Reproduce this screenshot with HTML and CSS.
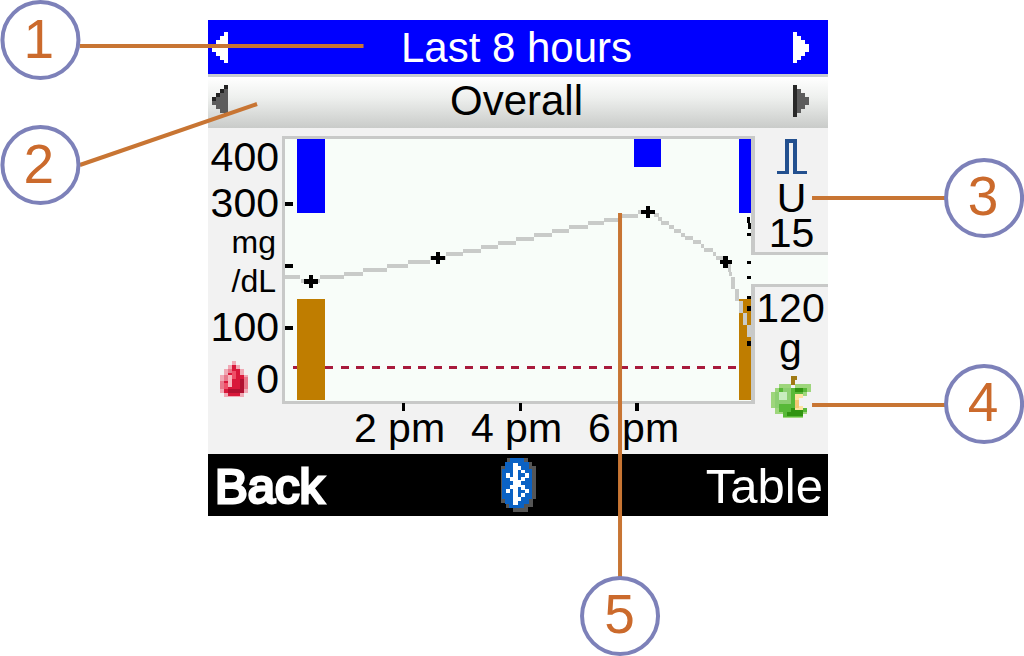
FILE: index.html
```html
<!DOCTYPE html>
<html lang="en">
<head>
<meta charset="utf-8">
<title>Last 8 hours – Overall</title>
<link rel="stylesheet" href="styles.css">
</head>
<body>
<main class="figure">
  <section class="device">
    <header class="bar bar-period">
      <button class="arrow" type="button" aria-label="Previous period">
        <svg width="16" height="32" viewBox="0 0 16 32" shape-rendering="crispEdges"><path fill="#fff" d="M12 0h4v31h-4v-3h-4v-4H4v-4H0v-8h4V8h4V4h4z"/></svg>
      </button>
      <h1 class="bar-title">Last 8 hours</h1>
      <button class="arrow" type="button" aria-label="Next period">
        <svg width="16" height="32" viewBox="0 0 16 32" shape-rendering="crispEdges"><path fill="#fff" d="M0 0h4v4h4v4h4v4h4v8h-4v4H8v4H4v3H0z"/></svg>
      </button>
    </header>
    <div class="bar bar-view">
      <button class="arrow" type="button" aria-label="Previous view">
        <svg width="16" height="32" viewBox="0 0 16 32" shape-rendering="crispEdges"><path fill="#5c5c5c" d="M12 0h4v31h-4v-3h-4v-4H4v-4H0v-8h4V8h4V4h4z"/><path fill="#222" d="M12 0h4v4h-4zM8 4h4v4H8zM4 8h4v4H4zM0 12h4v4H0z"/></svg>
      </button>
      <h2 class="bar-title">Overall</h2>
      <button class="arrow" type="button" aria-label="Next view">
        <svg width="16" height="32" viewBox="0 0 16 32" shape-rendering="crispEdges"><path fill="#5c5c5c" d="M4 4h4v4h4v4h4v8h-4v4H8v4H4z"/><path fill="#282828" d="M0 0h4v32H0z"/></svg>
      </button>
    </div>

    <div class="body">
      <div class="y-axis">
        <span class="tick-label">400</span>
        <span class="tick-label">300</span>
        <span class="unit">mg</span>
        <span class="unit">/dL</span>
        <span class="tick-label">100</span>
        <span class="tick-label zero">
          <svg class="drop" width="28" height="36" viewBox="0 0 28 36" shape-rendering="crispEdges">
            <path fill="#f0a9b5" d="M12 0h4v4h4v4h4v6h4v18h-4v4H4v-4H0V14h4V8h4V4h4z"/>
            <path fill="#d9183a" d="M12 4h4v4h4v6h4v18h-4v3H8v-3H4V14h4V8h4z"/>
            <path fill="#e8788a" d="M0 20h4v8H0zM4 14h4v6H4zM8 8h4v4H8zM24 16h4v12h-4z"/>
            <path fill="#f7b5bd" d="M8 14h4v12H8z"/>
            <path fill="#ef5068" d="M12 10h4v8h-4zM4 22h4v6H4z"/>
            <path fill="#b01030" d="M20 18h4v14h-4zM8 28h12v4H8z"/>
          </svg>
          0
        </span>
      </div>

      <div class="plot">
        <svg class="plot-area" viewBox="282 136 473 275" preserveAspectRatio="none" shape-rendering="crispEdges" role="img" aria-label="Blood glucose over the last 8 hours">
          <rect class="ground" x="285" y="139" width="466" height="262"/>
          <rect class="ground" x="751" y="255" width="4" height="29"/>
          <path class="frame" d="M282 136h473v119h-4V139H285v262h466V284h4v120H282z"/>
          <path class="insulin" d="M297 139h28v74h-28zM634 139h27v28h-27zM739 139h12v74h-12z"/>
          <path class="carbs" d="M297 299h28v101h-28zM739 299h12v101h-12z"/>
          <path class="limit" d="M293 367h4M325 367H736"/>
          <path class="trace" d="M285 277h15M301 281h19M320 277h24M344 274h19M363 270h24M387 266h21M408 262h22M430 258h16M446 254h17M463 251h18M481 247h17M498 243h18M516 239h18M534 235h18M552 231h17M569 227h19M588 223h16M604 220h16M620 216h18M638 212h17M654 215h5M658 219h4M661 223h8M669 227h5M674 231h7M681 235h4M685 238h8M693 242h8M701 246h3M704 250h9M713 254h3M716 258h10M720 262h8M728 266h3M728 270h3M729 274h3M731 279h4M731 283h4M731 287h4M735 291h4M735 295h4M735 299h4M739 303h4M739 307h4M739 311h4M743 315h4M743 319h4M743 323h4M747 327h4M747 331h4M747 335h4"/>
          <path class="ink" d="M309 275h4v4h5v5h-5v4h-4v-4h-5v-5h5zM436 252h4v4h5v4h-5v4h-4v-4h-5v-4h5zM646 206h4v4h5v4h-5v4h-4v-4h-5v-4h5zM723 256h5v4h4v4h-4v4h-5v-4h-3v-4h3z"/>
          <path class="ink" d="M285 202h8v4h-8zM285 264h8v4h-8zM285 326h8v4h-8zM402 403h3v8h-3zM519 403h3v8h-3zM635 403h4v8h-4z"/>
          <path class="ink" d="M747 217h3v6h-3zM748 223h3v6h-3zM747 233h4v3h-4zM747 261h4v3h-4zM747 276h4v3h-4zM747 296h4v3h-4zM747 306h4v5h-4zM747 341h4v5h-4z"/>
        </svg>
        <div class="x-axis">
          <span class="x-first">2 pm</span>
          <span>4 pm</span>
          <span>6 pm</span>
        </div>
      </div>

      <aside class="scales">
        <div class="scale scale-insulin">
          <svg width="30" height="35" viewBox="0 0 30 35" shape-rendering="crispEdges"><path fill="#23508f" d="M8 0h12v32h10v3H16V4h-4v31H0v-3h8z"/></svg>
          <span>U<br>15</span>
        </div>
        <div class="scale scale-carbs">
          <span>120<br>g</span>
          <svg class="apple" width="40" height="42" viewBox="0 0 40 42" shape-rendering="crispEdges">
            <path fill="#9ed67c" d="M8 8h12v4h4V8h16v8h-4v4h-8v12h8v6h-4v4H12v-4H4v-6H0V16h4v-4h4z"/>
            <path fill="#58b938" d="M8 12h28v4h-4v4h-8v12h12v4h-4v5H12v-5H8v-4H4V16h4z"/>
            <path fill="#8dcf72" d="M4 16h16v12H8v4H4zM12 12h8v4h-8z"/>
            <path fill="#c9edc0" d="M8 16h8v8H8z"/>
            <path fill="#2f9410" d="M24 12h8v4h-8zM20 32h12v4H20zM16 36h16v4H16z"/>
            <path fill="#fbe3a0" d="M24 18h8v4h-4v8h4v4h-8z"/>
            <path fill="#f3c873" d="M24 24h4v8h-4z"/>
            <path fill="#a07a14" d="M20 0h6v4h-2v5h-4z"/>
          </svg>
        </div>
      </aside>
    </div>

    <footer class="softkeys">
      <button class="key key-back" type="button">Back</button>
      <svg class="bluetooth" width="36" height="54" viewBox="0 0 36 54" shape-rendering="crispEdges">
        <path fill="#555" d="M6 0h21v4h4v4h4v33h-3v8h-5v5H12v-4H5v-5H0V8h5z"/>
        <path fill="#0b62c4" d="M9 0h14v4h5v7h3v30h-3v5h-5v4H8v-4H4v-5H1V11h3V4h5z"/>
        <path fill="#fff" d="M12 5h5v3h3v4h4v3h4v5h-4v3h-4v4h4v4h4v4h-4v4h-4v4h-3v4h-5V31H9v4H5v-4h4v-4h3v-4H9v-3H5v-5h4v4h3z"/>
        <path fill="#0b62c4" d="M17 12h3v3h4v4h-4v3h-3zM17 29h3v3h4v3h-4v4h-3z"/>
      </svg>
      <button class="key key-table" type="button">Table</button>
    </footer>
  </section>

  <svg class="callouts" width="100%" height="656">
    <g class="leaders">
      <line x1="7.8%" y1="46" x2="35.5%" y2="46"/>
      <line x1="7.8%" y1="165" x2="25.1%" y2="104"/>
      <line x1="79.3%" y1="198" x2="92.3%" y2="198"/>
      <line x1="79.3%" y1="405" x2="92.3%" y2="405"/>
      <line x1="60.55%" y1="213" x2="60.55%" y2="578"/>
    </g>
    <g class="rings">
      <circle cx="3.95%" cy="40" r="38"/>
      <circle cx="3.95%" cy="165" r="38"/>
      <circle cx="96.1%" cy="198" r="38"/>
      <circle cx="96.1%" cy="404" r="38"/>
      <circle cx="60.55%" cy="616" r="38"/>
    </g>
    <g class="numbers">
      <text x="3.8%" y="58">1</text>
      <text x="3.8%" y="183">2</text>
      <text x="96%" y="215">3</text>
      <text x="96%" y="421">4</text>
      <text x="60.5%" y="633">5</text>
    </g>
  </svg>
</main>
</body>
</html>
```

FILE: styles.css
```css
* {
  box-sizing: border-box;
}

body {
  margin: 0;
  background: #fff;
  color: #000;
  font-family: "Liberation Sans", Arial, sans-serif;
  font-size: 41px;
}

svg {
  display: block;
}

.figure {
  position: relative;
  display: grid;
  grid-template-columns: 208fr 620fr 196fr;
  align-items: start;
  min-height: 656px;
  padding-top: 20px;
}

.device {
  grid-column: 2;
  background: #f2f2f2;
}

/* Selector bars */
.bar {
  display: flex;
  align-items: center;
  justify-content: space-between;
  height: 54px;
}

.bar-period {
  padding: 1px 19px 0 4px;
  background: #00f;
  color: #fff;
}

.bar-view {
  padding: 0 19px 4px 4px;
  border-top: 3px solid #c6cbd0;
  background: linear-gradient(#fff, #eef0ee 40%, #c9cbc9);
}

.bar-title {
  margin: 0;
  padding-left: 12px;
  font-size: 42px;
  font-weight: 400;
  line-height: 50px;
}

.arrow {
  padding: 0;
  border: 0;
  background: none;
}

/* Chart */
.body {
  display: grid;
  grid-template-columns: 74px 1fr 73px;
}

.y-axis {
  display: flex;
  flex-direction: column;
  align-items: flex-end;
  padding: 6px 3px 0 0;
}

.tick-label {
  line-height: 46px;
}

.unit {
  margin-bottom: 6px;
  padding-right: 3px;
  font-size: 32px;
  line-height: 33px;
}

.zero {
  display: flex;
  align-items: center;
  gap: 8px;
  margin-top: 6px;
}

.plot {
  padding-top: 8px;
}

.plot-area {
  width: 100%;
  height: 275px;
}

.ground { fill: #f8fdf9; }
.frame { fill: #c8c9c8; }
.insulin { fill: #00f; }
.carbs { fill: #bf7d00; }
.ink { fill: #000; }

.limit {
  fill: none;
  stroke: #a81a3c;
  stroke-width: 3;
  stroke-dasharray: 8 7.5;
}

.trace {
  fill: none;
  stroke: #c9cbc9;
  stroke-width: 4;
}

.x-axis {
  display: grid;
  grid-template-columns: 59fr 117fr 117fr 117fr 63fr;
  line-height: 34px;
  text-align: center;
  white-space: nowrap;
}

.x-first {
  grid-column: 2;
}

.scales {
  display: flex;
  flex-direction: column;
  gap: 29px;
  background: #f8fdf9;
}

.scale {
  display: flex;
  flex-direction: column;
  align-items: center;
  background: #f2f2f2;
  text-align: center;
}

.scale-insulin {
  padding: 11px 0 1px;
  border-bottom: 3px solid #c8c9c8;
  line-height: 35px;
}

.scale-insulin svg {
  margin-bottom: 7px;
}

.scale-carbs {
  padding: 1px 2px 36px 0;
  border-top: 3px solid #c8c9c8;
  line-height: 40px;
}

.apple {
  margin-top: 8px;
}

/* Soft keys */
.softkeys {
  display: grid;
  grid-template-columns: 1fr auto 1fr;
  align-items: center;
  height: 62px;
  padding: 0 5px 0 7px;
  background: #000;
}

.key {
  padding: 2px 0 0;
  border: 0;
  background: none;
  color: #fff;
  font-family: inherit;
  font-size: 49px;
  line-height: 60px;
}

.key-back {
  justify-self: start;
  -webkit-text-stroke: 3px #fff;
}

.key-table {
  justify-self: end;
}

/* Numbered callouts drawn over the device */
.callouts {
  position: absolute;
  top: 0;
  left: 0;
  pointer-events: none;
}

.leaders {
  stroke: #c87533;
  stroke-width: 4;
}

.rings {
  fill: #fff;
  stroke: #7d81b9;
  stroke-width: 4;
}

.numbers {
  fill: #cb6a2c;
  font-size: 55px;
  text-anchor: middle;
}
```
